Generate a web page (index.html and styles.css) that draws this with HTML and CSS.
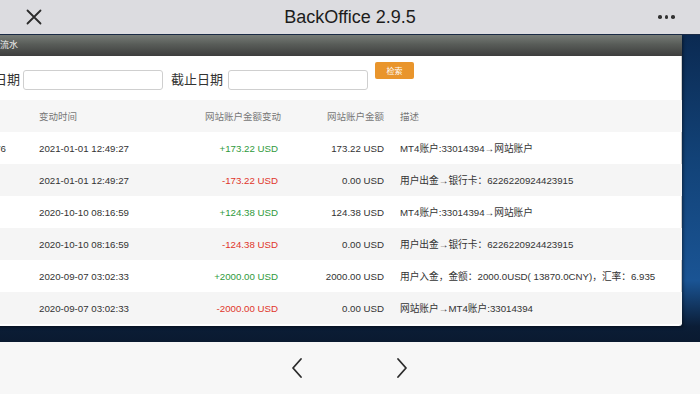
FILE: index.html
```html
<!DOCTYPE html>
<html lang="zh-CN">
<head>
    <meta charset="UTF-8">
    <meta name="viewport" content="width=device-width, initial-scale=1.0">
    <title>BackOffice 2.9.5</title>
    <link rel="stylesheet" href="styles.css">
</head>
<body>
    <div class="topbar">
        <svg class="close-icon" width="16" height="16" viewBox="0 0 16 16">
            <path d="M1.5 1.5 L14.5 14.5 M14.5 1.5 L1.5 14.5" stroke="#2b2b2b" stroke-width="1.8" fill="none" stroke-linecap="round"/>
        </svg>
        <div class="app-title">BackOffice 2.9.5</div>
        <div class="more">
            <span class="dot"></span><span class="dot"></span><span class="dot"></span>
        </div>
    </div>

    <div class="desktop">
        <div class="window">
            <div class="win-title">资金流水</div>
            <div class="win-body">
                <div class="search">
                    <label class="search-label">开始日期</label>
                    <input class="date-input" type="text">
                    <label class="search-label gap">截止日期</label>
                    <input class="date-input" type="text">
                    <button class="search-btn">检索</button>
                </div>

                <table class="flow">
                    <colgroup>
                        <col class="c-id">
                        <col class="c-time">
                        <col class="c-change">
                        <col class="c-balance">
                        <col class="c-desc">
                    </colgroup>
                    <thead>
                        <tr>
                            <th></th>
                            <th>变动时间</th>
                            <th class="right">网站账户金额变动</th>
                            <th class="right">网站账户金额</th>
                            <th>描述</th>
                        </tr>
                    </thead>
                    <tbody>
                        <tr>
                            <td class="right id">1776</td>
                            <td>2021-01-01 12:49:27</td>
                            <td class="right up">+173.22 USD</td>
                            <td class="right">173.22 USD</td>
                            <td>MT4账户:33014394→网站账户</td>
                        </tr>
                        <tr>
                            <td></td>
                            <td>2021-01-01 12:49:27</td>
                            <td class="right down">-173.22 USD</td>
                            <td class="right">0.00 USD</td>
                            <td>用户出金→银行卡：6226220924423915</td>
                        </tr>
                        <tr>
                            <td></td>
                            <td>2020-10-10 08:16:59</td>
                            <td class="right up">+124.38 USD</td>
                            <td class="right">124.38 USD</td>
                            <td>MT4账户:33014394→网站账户</td>
                        </tr>
                        <tr>
                            <td></td>
                            <td>2020-10-10 08:16:59</td>
                            <td class="right down">-124.38 USD</td>
                            <td class="right">0.00 USD</td>
                            <td>用户出金→银行卡：6226220924423915</td>
                        </tr>
                        <tr>
                            <td></td>
                            <td>2020-09-07 03:02:33</td>
                            <td class="right up">+2000.00 USD</td>
                            <td class="right">2000.00 USD</td>
                            <td>用户入金，金额：2000.0USD( 13870.0CNY)，汇率：6.935</td>
                        </tr>
                        <tr>
                            <td></td>
                            <td>2020-09-07 03:02:33</td>
                            <td class="right down">-2000.00 USD</td>
                            <td class="right">0.00 USD</td>
                            <td>网站账户→MT4账户:33014394</td>
                        </tr>
                    </tbody>
                </table>
            </div>
        </div>
    </div>

    <div class="bottombar">
        <svg width="14" height="22" viewBox="0 0 14 22">
            <path d="M11 2 L3 11 L11 20" stroke="#2b2b2b" stroke-width="1.8" fill="none" stroke-linecap="round" stroke-linejoin="round"/>
        </svg>
        <svg width="14" height="22" viewBox="0 0 14 22">
            <path d="M3 2 L11 11 L3 20" stroke="#2b2b2b" stroke-width="1.8" fill="none" stroke-linecap="round" stroke-linejoin="round"/>
        </svg>
    </div>
</body>
</html>
```

FILE: styles.css
```css
html, body {
    margin: 0;
    padding: 0;
}

body {
    width: 700px;
    height: 394px;
    overflow: hidden;
    background: #f7f7f7;
    font-family: 'Liberation Sans', 'Noto Sans CJK SC', sans-serif;
    color: #333;
}

/* 顶部导航 */
.topbar {
    height: 34px;
    background: #dcdce0;
    display: flex;
    align-items: center;
    padding: 0 22px 0 26px;
    box-sizing: border-box;
}

.close-icon {
    flex: none;
}

.app-title {
    flex: 1;
    text-align: center;
    font-size: 18px;
    color: #1c1c1c;
}

.more {
    display: flex;
    gap: 3px;
    width: 20px;
}

.dot {
    width: 3.5px;
    height: 3.5px;
    border-radius: 50%;
    background: #333;
}

/* 桌面区域 */
.desktop {
    height: 308px;
    overflow: hidden;
    background: linear-gradient(180deg, #0b2a52 0%, #124277 40%, #1a5494 80%, #0b1d36 95%, #0a1a30 100%);
    border-top: 1px solid #1b2b45;
    box-sizing: border-box;
}

.window {
    width: 722px;
    margin-left: -40px;
    box-shadow: 1px 1px 3px rgba(0, 0, 0, 0.5);
}

.win-title {
    height: 21px;
    line-height: 21px;
    padding-left: 22px;
    font-size: 9px;
    color: #f0f0f0;
    background: linear-gradient(180deg, #767b76 0%, #585c58 45%, #3d3d3d 100%);
}

.win-body {
    height: 270px;
    background: #fff;
    border-right: 1px solid #cfcfcf;
    border-radius: 0 0 3px 0;
    box-sizing: border-box;
}

/* 检索条件 */
.search {
    height: 44px;
    display: flex;
    align-items: flex-start;
    padding: 6px 0 0 8px;
    box-sizing: border-box;
}

.search-label {
    font-size: 13px;
    line-height: 20px;
    margin-top: 7px;
    margin-right: 3px;
    color: #333;
    font-family: 'Noto Sans CJK SC', sans-serif;
}

.search-label.gap {
    margin-left: 8px;
    margin-right: 5px;
}

.date-input {
    width: 140px;
    height: 20px;
    margin-top: 8px;
    border: 1px solid #cfcfcf;
    border-radius: 3px;
    box-sizing: border-box;
    padding: 0 4px;
}

.search-btn {
    margin-left: 7px;
    width: 39px;
    height: 17px;
    border: none;
    border-radius: 2px;
    background: #e9952c;
    color: #fff;
    font-size: 8px;
    padding: 0;
    font-family: 'Noto Sans CJK SC', sans-serif;
}

/* 流水表格 */
.flow {
    width: 722px;
    border-collapse: collapse;
    table-layout: fixed;
    font-size: 9.7px;
}

.c-id { width: 71px; }
.c-time { width: 139px; }
.c-change { width: 116px; }
.c-balance { width: 106px; }
.c-desc { width: 290px; }

.flow th,
.flow td {
    height: 32px;
    padding: 0 8px;
    text-align: left;
    white-space: nowrap;
    overflow: hidden;
    box-sizing: border-box;
}

.flow th {
    font-weight: normal;
    color: #777;
    font-size: 9.5px;
    background: #f6f6f6;
}

.flow th.right,
.flow td.right {
    text-align: right;
}

.flow th:nth-child(3) {
    padding-right: 5px;
}

.flow td.id {
    padding-right: 25px;
}

.flow td.up {
    color: #2f9a3c;
}

.flow td.down {
    color: #e0352b;
}

.flow tbody tr:nth-child(even) {
    background: #f5f5f5;
}

/* 底部工具栏 */
.bottombar {
    height: 52px;
    background: #f7f7f7;
    display: flex;
    justify-content: center;
    align-items: center;
    gap: 91px;
    padding-right: 2px;
}
```
